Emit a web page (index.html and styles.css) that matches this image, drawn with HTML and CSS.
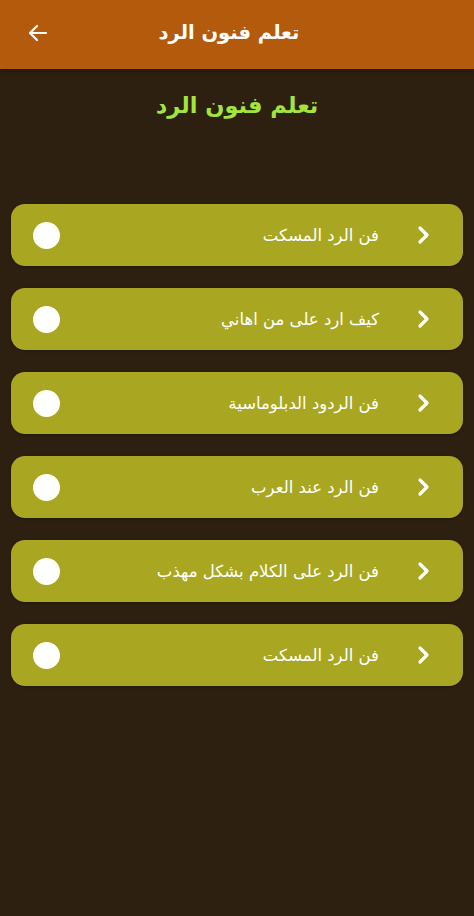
FILE: index.html
```html
<!DOCTYPE html>
<html lang="ar">
<head>
    <meta charset="UTF-8">
    <meta name="viewport" content="width=device-width, initial-scale=1.0">
    <title>تعلم فنون الرد</title>
    <link rel="stylesheet" href="styles.css">
</head>
<body>
    <header class="toolbar">
        <button class="back-btn" aria-label="رجوع">
            <svg width="24" height="24" viewBox="0 0 24 24">
                <path d="M20 12H5M11 5l-7 7 7 7" fill="none" stroke="#fff" stroke-width="2.2" stroke-linecap="round" stroke-linejoin="round"/>
            </svg>
        </button>
        <h1 class="toolbar-title">تعلم فنون الرد</h1>
        <div class="toolbar-spacer"></div>
    </header>

    <main class="content">
        <h2 class="page-title">تعلم فنون الرد</h2>

        <ul class="topics">
            <li class="topic">
                <svg class="chevron" width="14" height="20" viewBox="0 0 14 20"><path d="M4 3l7 7-7 7" fill="none" stroke="#fff" stroke-width="3.2" stroke-linecap="round" stroke-linejoin="round"/></svg>
                <span class="topic-name">فن الرد المسكت</span>
                <span class="dot"></span>
            </li>
            <li class="topic">
                <svg class="chevron" width="14" height="20" viewBox="0 0 14 20"><path d="M4 3l7 7-7 7" fill="none" stroke="#fff" stroke-width="3.2" stroke-linecap="round" stroke-linejoin="round"/></svg>
                <span class="topic-name">كيف ارد على من اهاني</span>
                <span class="dot"></span>
            </li>
            <li class="topic">
                <svg class="chevron" width="14" height="20" viewBox="0 0 14 20"><path d="M4 3l7 7-7 7" fill="none" stroke="#fff" stroke-width="3.2" stroke-linecap="round" stroke-linejoin="round"/></svg>
                <span class="topic-name">فن الردود الدبلوماسية</span>
                <span class="dot"></span>
            </li>
            <li class="topic">
                <svg class="chevron" width="14" height="20" viewBox="0 0 14 20"><path d="M4 3l7 7-7 7" fill="none" stroke="#fff" stroke-width="3.2" stroke-linecap="round" stroke-linejoin="round"/></svg>
                <span class="topic-name">فن الرد عند العرب</span>
                <span class="dot"></span>
            </li>
            <li class="topic">
                <svg class="chevron" width="14" height="20" viewBox="0 0 14 20"><path d="M4 3l7 7-7 7" fill="none" stroke="#fff" stroke-width="3.2" stroke-linecap="round" stroke-linejoin="round"/></svg>
                <span class="topic-name">فن الرد على الكلام بشكل مهذب</span>
                <span class="dot"></span>
            </li>
            <li class="topic">
                <svg class="chevron" width="14" height="20" viewBox="0 0 14 20"><path d="M4 3l7 7-7 7" fill="none" stroke="#fff" stroke-width="3.2" stroke-linecap="round" stroke-linejoin="round"/></svg>
                <span class="topic-name">فن الرد المسكت</span>
                <span class="dot"></span>
            </li>
        </ul>
    </main>
</body>
</html>
```

FILE: styles.css
```css
body {
    font-family: 'DejaVu Sans', sans-serif;
    background-color: #2e2010;
    margin: 0;
    padding: 0;
    min-height: 100vh;
}

.toolbar {
    display: flex;
    align-items: center;
    height: 69px;
    background-color: #b45a0c;
    box-shadow: 0 2px 4px rgba(0, 0, 0, 0.35);
}

.back-btn {
    width: 72px;
    height: 69px;
    display: flex;
    align-items: center;
    justify-content: center;
    background: none;
    border: none;
    padding: 0 0 4px 3px;
    cursor: pointer;
}

.toolbar-title {
    flex: 1;
    margin: 0 0 4px;
    color: #fff;
    font-size: 19.5px;
    font-weight: bold;
    text-align: center;
    direction: rtl;
}

.toolbar-spacer {
    width: 88px;
}

.content {
    padding: 20px 11px;
}

.page-title {
    margin: 0;
    color: #a3e43e;
    font-size: 22.5px;
    font-weight: bold;
    text-align: center;
    line-height: 32px;
    direction: rtl;
}

.topics {
    list-style: none;
    margin: 83px 0 0;
    padding: 0;
    display: flex;
    flex-direction: column;
    gap: 22px;
}

.topic {
    direction: rtl;
    display: flex;
    align-items: center;
    height: 62px;
    padding: 0 33px 0 22px;
    background-color: #a9a721;
    border-radius: 14px;
    box-shadow: 0 1px 3px rgba(0, 0, 0, 0.3);
}

.chevron {
    flex-shrink: 0;
}

.topic-name {
    margin-right: 37px;
    color: #fff;
    font-size: 16.5px;
}

.dot {
    margin-right: auto;
    width: 27px;
    height: 27px;
    border-radius: 50%;
    background-color: #fff;
}
```
